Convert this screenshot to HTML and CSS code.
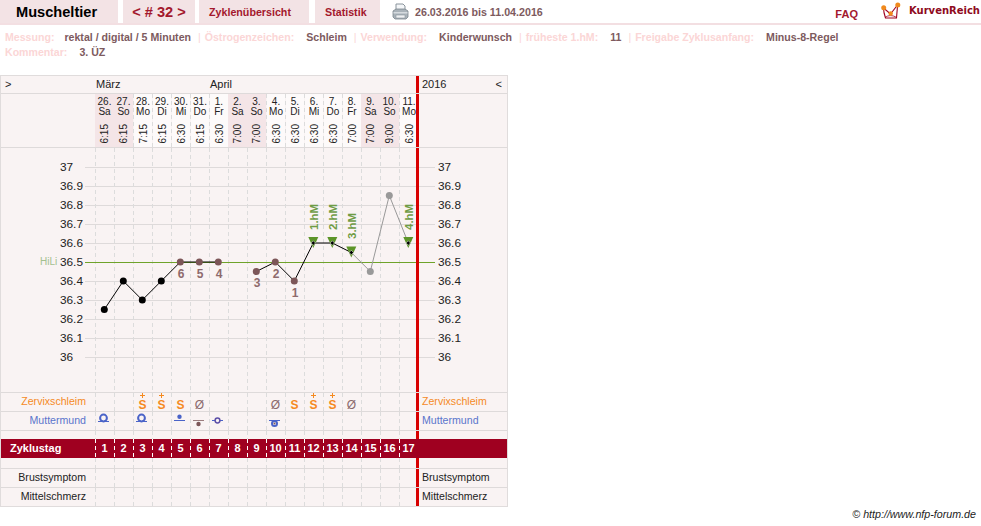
FILE: index.html
```html
<!DOCTYPE html>
<html lang="de">
<head>
    <meta charset="UTF-8">
    <meta name="viewport" content="width=device-width, initial-scale=1.0">
    <title>Muscheltier - Zyklus 32</title>
    <link rel="stylesheet" href="styles.css">
</head>
<body>
    <div class="top-bar">
        <div class="tab tab-name">Muscheltier</div>
        <div class="tab tab-cycle">&lt; # 32 &gt;</div>
        <div class="tab tab-overview">Zyklenübersicht</div>
        <div class="tab tab-stats">Statistik</div>
        <svg class="printer" width="17" height="17" viewBox="0 0 17 17">
            <path d="M4 1h7l2 2v5H4z" fill="#f4f6f8" stroke="#8a949c"/>
            <path d="M1 8l3-2h9l3 2v6l-2 2H3l-2-2z" fill="#a9b2b9" stroke="#7b858d" stroke-width=".8"/>
            <path d="M1.500 9h14v1.500h-14z" fill="#d5dade"/>
            <path d="M4 12h9v3H4z" fill="#eef0f2" stroke="#8a949c" stroke-width=".6"/>
        </svg>
        <div class="dates">26.03.2016 bis 11.04.2016</div>
        <a class="faq">FAQ</a>
        <svg class="logo-icon" width="20" height="19" viewBox="0 0 20 19">
            <path d="M2.500 6c0 3 1 7 2 10h11l1-12" fill="none" stroke="#9f0020" stroke-width="1.100"/>
            <path d="M2.500 6l7 6 7-9" fill="none" stroke="#9f0020" stroke-width="1.100"/>
            <path d="M4 15.500c3-2.500 8-2.500 11.500 0" fill="none" stroke="#9f0020" stroke-width=".8"/>
            <circle cx="2.700" cy="5.700" r="2.500" fill="#f08a1d"/>
            <circle cx="9.700" cy="11.500" r="2.200" fill="#f08a1d"/>
            <circle cx="16.800" cy="3" r="2.500" fill="#f08a1d"/>
        </svg>
        <div class="logo-text">KurvenReich</div>
    </div>

    <div class="info">
        <div>
            <span class="lbl">Messung:</span><span class="val val-first">rektal / digital / 5 Minuten</span><span class="sep">|</span>
            <span class="lbl">Östrogenzeichen:</span><span class="val">Schleim</span><span class="sep">|</span>
            <span class="lbl">Verwendung:</span><span class="val">Kinderwunsch</span><span class="sep">|</span>
            <span class="lbl">früheste 1.hM:</span><span class="val">11</span><span class="sep">|</span>
            <span class="lbl">Freigabe Zyklusanfang:</span><span class="val">Minus-8-Regel</span>
        </div>
        <div><span class="lbl">Kommentar:</span><span class="val">3. ÜZ</span></div>
    </div>

    <div class="panel">
        <div class="row row-months">
            <div class="arrow">&gt;</div>
            <div class="months"><span class="march">März</span><span>April</span></div>
            <div class="side side-year"><span>2016</span><span class="arrow-back">&lt;</span></div>
        </div>

        <div class="row row-days">
            <div></div>
            <div class="track days">
                <div class="day we"><span>26.<br>Sa</span><b>6:15</b></div>
                <div class="day we"><span>27.<br>So</span><b>6:15</b></div>
                <div class="day"><span>28.<br>Mo</span><b>7:15</b></div>
                <div class="day"><span>29.<br>Di</span><b>6:15</b></div>
                <div class="day"><span>30.<br>Mi</span><b>6:30</b></div>
                <div class="day"><span>31.<br>Do</span><b>6:15</b></div>
                <div class="day"><span>1.<br>Fr</span><b>6:30</b></div>
                <div class="day we"><span>2.<br>Sa</span><b>7:00</b></div>
                <div class="day we"><span>3.<br>So</span><b>7:00</b></div>
                <div class="day"><span>4.<br>Mo</span><b>6:30</b></div>
                <div class="day"><span>5.<br>Di</span><b>6:30</b></div>
                <div class="day"><span>6.<br>Mi</span><b>6:30</b></div>
                <div class="day"><span>7.<br>Do</span><b>6:30</b></div>
                <div class="day"><span>8.<br>Fr</span><b>7:00</b></div>
                <div class="day we"><span>9.<br>Sa</span><b>7:00</b></div>
                <div class="day we"><span>10.<br>So</span><b>9:00</b></div>
                <div class="day"><span>11.<br>Mo</span><b>6:30</b></div>
            </div>
            <div class="side"></div>
        </div>

        <!-- viewBox uses page coordinates -->
        <svg class="chart" width="506" height="244" viewBox="1 148 506 244">
            <g class="grid">
                <path d="M85 167H435M85 186H435M85 205H435M85 224H435M85 243H435M85 281H435M85 300H435M85 319H435M85 338H435M85 357H435"/>
            </g>
            <path class="dash" d="M95.500 148V392M114.500 148V392M133.500 148V392M152.500 148V392M171.500 148V392M190.500 148V392M209.500 148V392M228.500 148V392M247.500 148V392M266.500 148V392M285.500 148V392M304.500 148V392M323.500 148V392M342.500 148V392M361.500 148V392M380.500 148V392M399.500 148V392"/>
            <rect class="hili" x="85" y="262" width="350" height="1"/>
            <rect class="red" x="416" y="148" width="3" height="244"/>

            <g class="scale">
                <text x="60" y="171">37</text><text x="60" y="190">36.9</text><text x="60" y="209">36.8</text><text x="60" y="228">36.7</text>
                <text x="60" y="247">36.6</text><text x="60" y="266">36.5</text><text x="60" y="285">36.4</text><text x="60" y="304">36.3</text>
                <text x="60" y="323">36.2</text><text x="60" y="342">36.1</text><text x="60" y="361">36</text>
                <text x="438" y="171">37</text><text x="438" y="190">36.9</text><text x="438" y="209">36.8</text><text x="438" y="228">36.7</text>
                <text x="438" y="247">36.6</text><text x="438" y="266">36.5</text><text x="438" y="285">36.4</text><text x="438" y="304">36.3</text>
                <text x="438" y="323">36.2</text><text x="438" y="342">36.1</text><text x="438" y="361">36</text>
            </g>
            <text class="hili-label" x="40" y="265">HiLi</text>

            <polyline class="line" points="104.300,309.500 123.300,281 142.300,300 161.300,281 180.300,262 199.300,262 218.300,262"/>
            <polyline class="line" points="256.300,271.500 275.300,262 294.300,281 313.300,243 332.300,243 351.300,252.500"/>
            <polyline class="line-grey" points="351.300,252.500 370.300,271.500 389.300,195.500 408.300,243"/>

            <g class="pt-black">
                <circle cx="104.300" cy="309.500" r="3.500"/><circle cx="123.300" cy="281" r="3.500"/>
                <circle cx="142.300" cy="300" r="3.500"/><circle cx="161.300" cy="281" r="3.500"/>
            </g>
            <g class="pt-brown">
                <circle cx="180.300" cy="262" r="3.500"/><circle cx="199.300" cy="262" r="3.500"/><circle cx="218.300" cy="262" r="3.500"/>
                <circle cx="256.300" cy="271.500" r="3.500"/><circle cx="275.300" cy="262" r="3.500"/><circle cx="294.300" cy="281" r="3.500"/>
            </g>
            <g class="pt-grey">
                <circle cx="370.300" cy="271.500" r="3.500"/><circle cx="389.300" cy="195.500" r="3.500"/>
            </g>
            <g class="tri">
                <path d="M308.300 237h10l-5 11z"/><path d="M327.300 237h10l-5 11z"/>
                <path d="M346.300 246.500h10l-5 11z"/><path d="M403.300 237h10l-5 11z"/>
            </g>
            <g class="dia">
                <path d="M313.300 240.800l2.200 2.200-2.200 2.200-2.200-2.200z"/><path d="M332.300 240.800l2.200 2.200-2.200 2.200-2.200-2.200z"/>
                <path d="M351.300 250.300l2.200 2.200-2.200 2.200-2.200-2.200z"/><path d="M408.300 240.800l2.200 2.200-2.200 2.200-2.200-2.200z"/>
            </g>

            <g class="nums">
                <text x="181" y="278">6</text><text x="200" y="278">5</text><text x="219" y="278">4</text>
                <text x="257" y="287">3</text><text x="276" y="278">2</text><text x="295" y="297">1</text>
            </g>
            <g class="hm">
                <text transform="translate(317.500 230) rotate(-90)">1.hM</text>
                <text transform="translate(336.500 230) rotate(-90)">2.hM</text>
                <text transform="translate(355.500 239) rotate(-90)">3.hM</text>
                <text transform="translate(412.500 230) rotate(-90)">4.hM</text>
            </g>
        </svg>

        <div class="row row-sym row-first">
            <div class="name name-zs">Zervixschleim</div>
            <div class="track cells">
                <i></i><i></i>
                <i class="zs"><em></em>S</i>
                <i class="zs"><em></em>S</i>
                <i class="zs">S</i>
                <i class="zs zs-dry">Ø</i>
                <i></i><i></i><i></i>
                <i class="zs zs-dry">Ø</i>
                <i class="zs">S</i>
                <i class="zs"><em></em>S</i>
                <i class="zs"><em></em>S</i>
                <i class="zs zs-dry">Ø</i>
            </div>
            <div class="side side-name name-zs">Zervixschleim</div>
        </div>

        <div class="row row-sym">
            <div class="name name-mm">Muttermund</div>
            <div class="track cells">
                <i><svg width="19" height="18" viewBox="0 0 19 18"><path class="mm-line" d="M3 9.500h11"/><circle class="mm-ring" cx="8.500" cy="6" r="3.400"/></svg></i>
                <i></i>
                <i><svg width="19" height="18" viewBox="0 0 19 18"><path class="mm-line" d="M3 9.500h11"/><circle class="mm-ring" cx="8.500" cy="6" r="3.400"/></svg></i>
                <i></i>
                <i><svg width="19" height="18" viewBox="0 0 19 18"><path class="mm-line" d="M3 8.500h11"/><circle class="mm-dot" cx="8.500" cy="4.700" r="2.200"/></svg></i>
                <i><svg width="19" height="18" viewBox="0 0 19 18"><path class="mm-line-brown" d="M3 8.500h11"/><circle class="mm-dot-brown" cx="8.500" cy="12" r="2.200"/></svg></i>
                <i><svg width="19" height="18" viewBox="0 0 19 18"><path class="mm-line" d="M3 8.500h11"/><circle class="mm-ring-small" cx="8.500" cy="8.500" r="2.400"/></svg></i>
                <i></i><i></i>
                <i><svg width="19" height="18" viewBox="0 0 19 18"><path class="mm-line" d="M3 8.500h11"/><circle class="mm-ring" cx="8.500" cy="11.500" r="2.500"/><circle class="mm-dot-brown" cx="8.500" cy="11.500" r="1"/></svg></i>
            </div>
            <div class="side side-name name-mm">Muttermund</div>
        </div>

        <div class="row row-gap">
            <div></div>
            <div class="track"></div>
            <div class="side"></div>
        </div>

        <div class="row row-bar">
            <div class="bar-name">Zyklustag</div>
            <div class="track track-bar bar-days">
                <span>1</span><span>2</span><span>3</span><span>4</span><span>5</span><span>6</span><span>7</span><span>8</span><span>9</span>
                <span>10</span><span>11</span><span>12</span><span>13</span><span>14</span><span>15</span><span>16</span><span>17</span>
            </div>
            <div></div>
        </div>

        <div class="row row-gap2">
            <div></div>
            <div class="track"></div>
            <div class="side"></div>
        </div>

        <div class="row row-sym">
            <div class="name">Brustsymptom</div>
            <div class="track"></div>
            <div class="side side-name">Brustsymptom</div>
        </div>
        <div class="row row-sym row-last">
            <div class="name">Mittelschmerz</div>
            <div class="track"></div>
            <div class="side side-name">Mittelschmerz</div>
        </div>
    </div>

    <div class="footer">© http://www.nfp-forum.de</div>
</body>
</html>
```

FILE: styles.css
```css
body {
    margin: 0;
    font-family: "Liberation Sans", Arial, sans-serif;
    background: #fff;
    color: #222;
}

/* top */
.top-bar {
    display: flex;
    align-items: center;
    height: 23px;
    border-bottom: 2px solid #f3dfe2;
}
.tab {
    height: 23px;
    box-sizing: border-box;
    line-height: 24px;
    background: #f3e3e5;
    color: #a3182d;
    font-weight: bold;
    font-size: 10.700px;
}
.tab-name {
    width: 118px;
    padding-left: 16px;
    font-size: 14.600px;
    color: #000;
}
.tab-cycle {
    width: 72px;
    margin-left: 5px;
    font-size: 14.600px;
    text-align: center;
}
.tab-overview {
    width: 110px;
    margin-left: 4px;
    padding-left: 10px;
}
.tab-stats {
    width: 65px;
    margin-left: 6px;
    padding-left: 10px;
}
.printer {
    margin-left: 12px;
}
.dates {
    margin-left: 6px;
    font-size: 10.700px;
    font-weight: bold;
    color: #7d5a5e;
}
.faq {
    margin-left: auto;
    margin-top: 5px;
    font-size: 11px;
    font-weight: bold;
    color: #a3182d;
}
.logo-icon {
    margin-left: 23px;
}
.logo-text {
    margin: 0 1px 3px 8px;
    font-family: "DejaVu Sans", sans-serif;
    font-size: 10px;
    font-weight: bold;
    color: #8e0a20;
}

.info {
    padding: 5px 0 0 5px;
    height: 50px;
    box-sizing: border-box;
    font-size: 10.600px;
    line-height: 15px;
    font-weight: bold;
    white-space: nowrap;
}
.lbl {
    color: #fbd6d6;
}
.val {
    margin-left: 12px;
    color: #7d5a5e;
}
.val-first {
    margin-left: 10px;
}
.sep {
    margin: 0 1px 0 7px;
    color: #fbd6d6;
    font-weight: normal;
}

/* chart panel */
.panel {
    width: 506px;
    background: #f9f3f3;
    border: 1px solid #e0dcdc;
}
.row {
    display: grid;
    grid-template-columns: 94px 321px 91px;
    border-bottom: 1px solid #dedada;
    box-sizing: border-box;
}
.side {
    border-left: 3px solid #d80000;
}
.track {
    background:
        repeating-linear-gradient(to bottom, transparent 0 4px, #f9f3f3 4px 7px),
        repeating-linear-gradient(to right, #dcdcdc 0 1px, transparent 1px 19px);
}

.row-months {
    height: 18px;
    font-size: 11px;
    line-height: 17px;
}
.arrow {
    padding-left: 4px;
}
.months {
    white-space: nowrap;
}
.march {
    display: inline-block;
    width: 114px;
    margin-left: 1px;
}
.side-year {
    display: flex;
    justify-content: space-between;
    padding: 0 5px 0 3px;
}

.row-days {
    height: 54px;
}
.days {
    display: grid;
    grid-template-columns: repeat(17, 19px);
    overflow: hidden;
}
.day {
    display: flex;
    flex-direction: column;
    align-items: center;
    margin-left: 1px;
    padding-top: 3px;
    background: #fdfafa;
    font-size: 10px;
    line-height: 9.500px;
    text-align: center;
}
.day.we {
    margin-left: 0;
    background: #f4e5e7;
}
.day b {
    margin-top: 8px;
    font-weight: normal;
    font-size: 10px;
    line-height: 11px;
    writing-mode: vertical-rl;
    transform: rotate(180deg);
}

.chart {
    display: block;
}
.grid path {
    stroke: #dedada;
    stroke-width: 1;
    fill: none;
    shape-rendering: crispEdges;
}
.dash {
    stroke: #dcdcdc;
    stroke-width: 1;
    stroke-dasharray: 4 3;
    fill: none;
    shape-rendering: crispEdges;
}
.hili {
    fill: #6fa32a;
}
.red {
    fill: #d80000;
}
.scale text {
    font-size: 11.800px;
    fill: #222;
}
.hili-label {
    font-size: 10px;
    fill: #a3c08f;
}
.line {
    fill: none;
    stroke: #000;
    stroke-width: 1;
}
.line-grey {
    fill: none;
    stroke: #999;
    stroke-width: 1;
}
.pt-black circle {
    fill: #000;
}
.pt-brown circle {
    fill: #7c5658;
}
.pt-grey circle {
    fill: #999;
}
.tri path {
    fill: #5c9428;
}
.dia path {
    fill: #000;
    stroke: #fff;
    stroke-width: .5;
}
.nums text {
    font-size: 12px;
    font-weight: bold;
    fill: #8e6a6c;
    text-anchor: middle;
}
.hm text {
    font-size: 11.500px;
    font-weight: bold;
    fill: #6f9c45;
}

/* symptom rows */
.row-sym {
    height: 19px;
    font-size: 10.600px;
    line-height: 17px;
}
.row-first {
    height: 20px;
    border-top: 1px solid #dedada;
}
.row-last {
    height: 18px;
    border-bottom: 0;
}
.name {
    padding-right: 9px;
    text-align: right;
}
.side-name {
    padding-left: 3px;
}
.name-zs {
    color: #f58a1f;
}
.name-mm {
    color: #5a75cc;
}
.cells {
    display: grid;
    grid-template-columns: repeat(17, 19px);
}
.cells i {
    display: block;
    font-style: normal;
}
.cells svg {
    display: block;
}
.cells .zs {
    padding-top: 6px;
    text-align: center;
    font-size: 12px;
    line-height: 12px;
    font-weight: bold;
    color: #f58a1f;
}
.cells .zs-dry {
    font-weight: normal;
    color: #8a6a6c;
}
/* the plus above the S */
.zs em {
    display: block;
    width: 5px;
    height: 5px;
    margin: -5px auto 0;
    position: relative;
    top: -1px;
    background:
        linear-gradient(#f58a1f, #f58a1f) center / 5px 1px no-repeat,
        linear-gradient(#f58a1f, #f58a1f) center / 1px 5px no-repeat;
}
.mm-line {
    stroke: #4a63c8;
    stroke-width: 1;
}
.mm-line-brown {
    stroke: #9a7c7e;
    stroke-width: 1;
}
.mm-ring {
    fill: #f9f3f3;
    stroke: #4a63c8;
    stroke-width: 2;
}
.mm-ring-small {
    fill: #f9f3f3;
    stroke: #5d4fa8;
    stroke-width: 1.500;
}
.mm-dot {
    fill: #4a63c8;
}
.mm-dot-brown {
    fill: #7c5658;
}

.row-gap {
    height: 8px;
    border-bottom: 0;
}
.row-gap2 {
    height: 11px;
}
.row-bar {
    height: 19px;
    background: #9f0020;
    border-bottom: 0;
    color: #fff;
    font-size: 11px;
    font-weight: bold;
    line-height: 19px;
}
.bar-name {
    padding-left: 9px;
}
.track-bar {
    background:
        repeating-linear-gradient(to bottom, transparent 0 4px, #9f0020 4px 7px),
        repeating-linear-gradient(to right, #fff 0 1px, transparent 1px 19px);
}
.bar-days {
    display: grid;
    grid-template-columns: repeat(17, 19px);
    overflow: hidden;
    text-align: center;
}

.footer {
    margin: 0 5px 0 0;
    text-align: right;
    font-size: 10.700px;
    font-style: italic;
    line-height: 14px;
}
```
